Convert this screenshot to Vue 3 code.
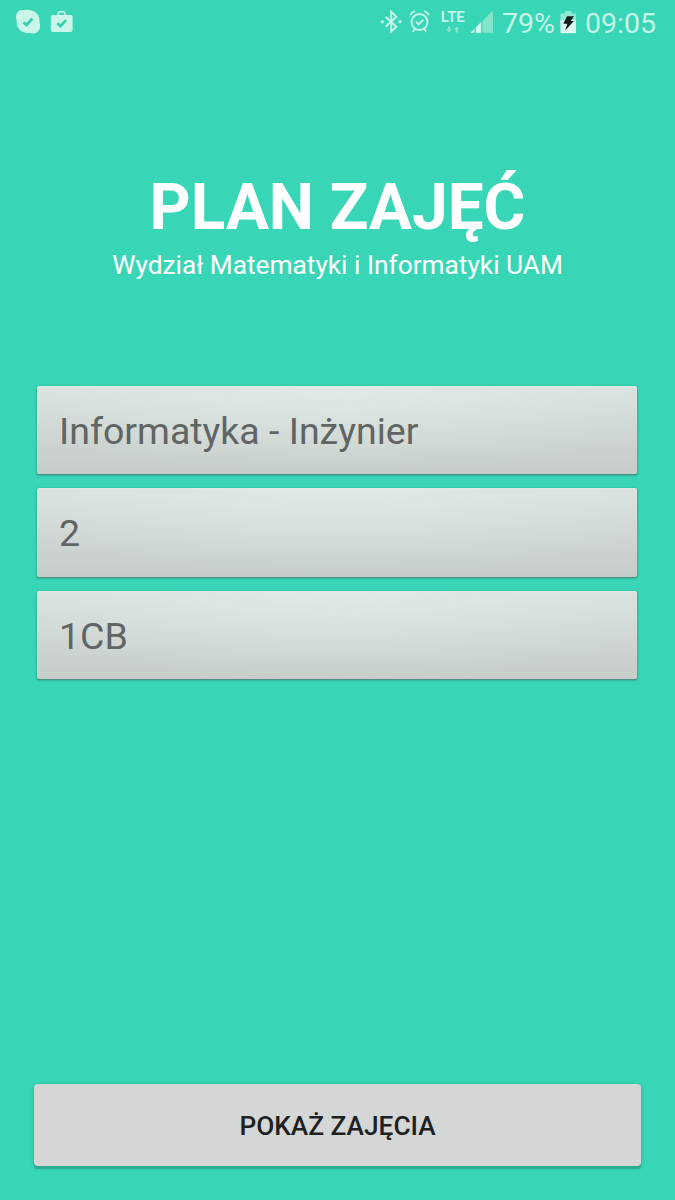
<script setup>
const fields = [
  { id: 'course', value: 'Informatyka - Inżynier' },
  { id: 'year', value: '2' },
  { id: 'group', value: '1CB' },
]
</script>

<template>
  <main class="screen">
    <header class="status">
      <svg class="apps" width="80" height="45" viewBox="0 0 80 45">
        <path d="M22.5 10.2C26 9.4 29.6 9.3 32.5 10.8C37.4 12.7 40.2 17 39.5 22.5C40.6 25.5 40.3 29 38.3 31.2C36.2 33.4 32.9 33.9 30 33C24.5 33.8 18.9 31 17.2 25.8C16.6 24 16.4 22.3 16.6 20.6C15.4 17.8 15.8 14.3 17.5 12.2C18.8 10.6 20.6 9.8 22.5 10.2Z" fill="#c9f6e9" />
        <path d="M23.5 22.2L26.6 25L32.3 18.5" class="check" />
        <path d="M58.3 15V13.2Q58.3 11.9 59.6 11.9H63.6Q64.9 11.9 64.9 13.2V15" fill="none" stroke="#b5f1e0" stroke-width="1.9" />
        <rect x="50.8" y="15" width="21.8" height="17" rx="2" fill="#c9f6e9" />
        <path d="M57.3 23.3L60.4 26.2L66 20.2" class="check" />
      </svg>
      <span class="spacer"></span>
      <svg class="signals" width="126" height="45" viewBox="374 0 126 45">
        <g fill="none" stroke="#c4f5e7" stroke-width="2">
          <path d="M385.7 16.7L396.3 26.7L391.2 31.5V11.8L396.3 16.7L385.7 26.7" />
          <path d="M380.4 21.7L382.4 19.7L384.4 21.7L382.4 23.7ZM398 21.7L400 19.7L402 21.7L400 23.7Z" fill="#c4f5e7" stroke="none" />
          <circle cx="419.5" cy="22" r="8" />
          <path d="M416 21.8L418.7 24.4L423.3 19.6M410.2 15Q411.5 12.2 415 11.1M424 11.1Q427.5 12.2 428.8 15M414.5 29L412.9 32M424.5 29L426.1 32" />
        </g>
        <text x="440.8" y="21.7" textLength="23.8" lengthAdjust="spacingAndGlyphs">LTE</text>
        <path d="M448 26.5H450V29.3H451.9L449 32.4L446.1 29.3H448ZM455.8 32.4V29.6H453.9L456.8 26.5L459.7 29.6H457.8V32.4Z" fill="#83e6cb" />
        <path d="M470.5 32.8L493 10.4V32.8Z" fill="#82e5cb" />
        <path d="M470.5 32.8L474.2 29.1V32.8ZM476 32.8V27.3L480.8 22.5V32.8Z" fill="#d4f8ee" />
        <path d="M475.1 27V33M481.8 21V33" stroke="#38d6b6" stroke-width="1" />
      </svg>
      <span class="percent">79%</span>
      <svg class="battery" width="18" height="45" viewBox="560 0 18 45">
        <path d="M560.5 13.5H565V11H571.5V13.5H576V23H560.5Z" fill="#91e9d2" />
        <path d="M560.5 20H576V33.2H560.5Z" fill="#dcfaf2" />
        <path d="M567 16.2H574L570.7 21H574L565.3 30.2L567.3 23.8H563.3Z" fill="#111b19" />
      </svg>
      <time class="clock">09:05</time>
    </header>

    <section class="heading">
      <h1>PLAN ZAJĘĆ</h1>
      <p>Wydział Matematyki i Informatyki UAM</p>
    </section>

    <section class="fields">
      <div v-for="field in fields" :key="field.id" class="field">{{ field.value }}</div>
    </section>

    <button class="submit" type="button">POKAŻ ZAJĘCIA</button>
  </main>
</template>

<style>
body {
  background: #38d6b6;
}
</style>

<style scoped>
.screen {
  display: flex;
  flex-direction: column;
  box-sizing: border-box;
  width: 675px;
  height: 1200px;
  overflow: hidden;
  padding-bottom: 34px;
  background: #38d6b6;
  font-family: Roboto, sans-serif;
}

.status {
  display: flex;
  height: 45px;
  line-height: 48px;
  font-size: 28.5px;
  color: #c4f5e7;
  white-space: nowrap;
}

.apps,
.signals,
.battery {
  flex: none;
  display: block;
}

.check {
  fill: none;
  stroke: #38cfb0;
  stroke-width: 2.7;
}

.signals text {
  font-size: 14.5px;
  font-weight: 700;
  fill: #c4f5e7;
}

.spacer {
  flex: 1;
}

.percent {
  width: 60px;
  text-indent: 2px;
}

.battery {
  margin-right: 7px;
}

.clock {
  width: 90px;
}

.heading {
  margin-top: 125px;
  color: #fff;
  text-align: center;
  white-space: nowrap;
}

h1 {
  margin: 0;
  font-size: 63.9px;
  line-height: 76px;
  font-weight: 700;
}

p {
  margin: 3px 0 0;
  font-size: 26.25px;
  line-height: 32px;
}

.fields {
  display: grid;
  gap: 14px;
  margin: 104.5px 38px 0 37px;
}

.field {
  box-sizing: border-box;
  height: 88.5px;
  padding-left: 22px;
  border-radius: 2px;
  background:
    radial-gradient(ellipse 60% 100% at 50% 0, rgba(230, 240, 236, 0.6), rgba(230, 240, 236, 0)),
    linear-gradient(#dae1de, #c5ccc9);
  box-shadow: 0 1px 1px #4d8d7e, 0 1px 3px rgba(0, 70, 55, 0.45), inset 0 1px 1px #e3e9e6;
  color: #606563;
  font-size: 37.5px;
  line-height: 90px;
}

.submit {
  height: 82px;
  margin: auto 34px 0;
  padding: 0;
  border: 0;
  border-radius: 4px;
  background: #d5d7d6;
  box-shadow: 0 3px 1px -0.5px #2fab92, 0 1px 4px rgba(0, 90, 70, 0.3);
  color: #1d211f;
  font: 500 26.25px/84px Roboto, sans-serif;
}
</style>
